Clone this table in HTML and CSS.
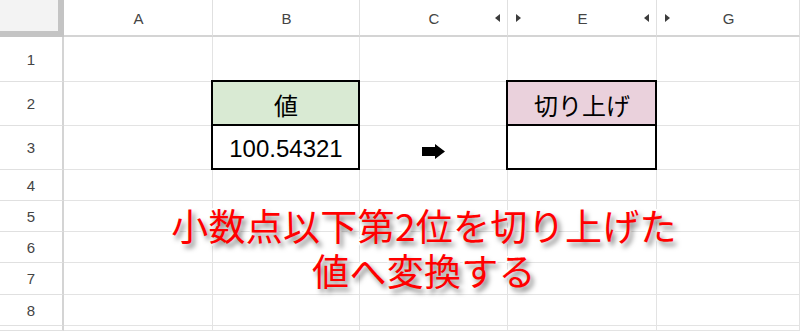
FILE: index.html
```html
<!DOCTYPE html>
<html lang="ja">
<head>
<meta charset="utf-8">
<title>切り上げ</title>
<link rel="stylesheet" href="styles.css">
</head>
<body>
<div class="sheet">
  <div class="grid">
    <div class="corner"></div>
    <div class="colhead"><span></span><span class="letter">A</span><span></span></div>
    <div class="colhead"><span></span><span class="letter">B</span><span></span></div>
    <div class="colhead"><span></span><span class="letter">C</span><span class="mark left"></span></div>
    <div class="colhead"><span class="mark right"></span><span class="letter">E</span><span class="mark left"></span></div>
    <div class="colhead"><span class="mark right"></span><span class="letter">G</span><span></span></div>

    <div class="rowhead">1</div><div class="cell"></div><div class="cell"></div><div class="cell"></div><div class="cell"></div><div class="cell"></div>

    <div class="rowhead">2</div><div class="cell"></div>
    <div class="cell box green jp">値</div>
    <div class="cell"></div>
    <div class="cell box pink jp">切り上げ</div>
    <div class="cell"></div>

    <div class="rowhead">3</div><div class="cell"></div>
    <div class="cell box num">100.54321</div>
    <div class="cell arrowcell"><svg class="arrow" width="23" height="15" viewBox="0 0 23 15"><path d="M0 3H13V0L23 7.5L13 15V12H0Z" fill="#000"/></svg></div>
    <div class="cell box"></div>
    <div class="cell"></div>

    <div class="rowhead">4</div><div class="cell"></div><div class="cell"></div><div class="cell"></div><div class="cell"></div><div class="cell"></div>
    <div class="rowhead">5</div><div class="cell"></div><div class="cell"></div><div class="cell"></div><div class="cell"></div><div class="cell"></div>
    <div class="rowhead">6</div><div class="cell"></div><div class="cell"></div><div class="cell"></div><div class="cell"></div><div class="cell"></div>
    <div class="rowhead">7</div><div class="cell"></div><div class="cell"></div><div class="cell"></div><div class="cell"></div><div class="cell"></div>
    <div class="rowhead">8</div><div class="cell"></div><div class="cell"></div><div class="cell"></div><div class="cell"></div><div class="cell"></div>
    <div class="rowhead"></div><div class="cell"></div><div class="cell"></div><div class="cell"></div><div class="cell"></div><div class="cell"></div>
  </div>
  <div class="caption">小数点以下第2位を切り上げた<br>値へ変換する</div>
</div>
</body>
</html>
```
FILE: styles.css
```css
* { box-sizing: border-box; }
html, body { margin: 0; padding: 0; background: #fff; }
.sheet {
  position: relative;
  width: 800px;
  height: 331px;
  overflow: hidden;
}
.grid {
  display: grid;
  grid-template-columns: 64px 149px 147px 148px 149px 1fr;
  grid-template-rows: 37px 45px 44px 44px 31px 31px 31px 32px 31px 1fr;
  height: 331px;
  font-family: "Liberation Sans", Arial, sans-serif;
}
.corner {
  background: #f3f3f3;
  border-right: 6px solid #c4c4c4;
  border-bottom: 6px solid #c4c4c4;
}
.colhead {
  display: grid;
  grid-template-columns: 1fr auto 1fr;
  align-items: center;
  padding: 0 7px 0 8px;
  border-right: 1px solid #e0e0e0;
  border-bottom: 2px solid #d4d4d4;
  font-size: 15px;
  color: #444;
}
.colhead .letter { padding-top: 1px; }
.mark { width: 0; height: 0; border-top: 4px solid transparent; border-bottom: 4px solid transparent; }
.mark.left { justify-self: end; border-right: 5px solid #3c3c3c; }
.mark.right { justify-self: start; border-left: 5px solid #3c3c3c; }
.rowhead {
  display: flex;
  align-items: center;
  justify-content: center;
  border-right: 2px solid #d4d4d4;
  border-bottom: 1px solid #e0e0e0;
  font-size: 15px;
  color: #444;
}
.cell {
  position: relative;
  display: flex;
  align-items: center;
  justify-content: center;
  border-right: 1px solid #e3e3e3;
  border-bottom: 1px solid #e3e3e3;
  color: #000;
}
.box::after {
  content: "";
  position: absolute;
  top: -2px;
  left: -2px;
  right: -1px;
  bottom: -1px;
  border: 2px solid #000;
  pointer-events: none;
}
.green { background: #d9ead3; }
.pink { background: #ead1dc; }
.jp {
  font-family: "Noto Sans CJK JP", "Liberation Sans", sans-serif;
  font-size: 24px;
  padding-top: 2px;
}
.num {
  font-family: "Liberation Sans", Arial, sans-serif;
  font-size: 24px;
  padding-top: 2px;
}
.arrowcell .arrow { margin-top: 8px; }
.caption {
  position: absolute;
  top: 203px;
  left: 124px;
  width: 600px;
  text-align: center;
  font-family: "Noto Sans CJK JP", sans-serif;
  font-size: 37px;
  line-height: 45px;
  letter-spacing: 0.3px;
  color: #ff0000;
  -webkit-text-stroke: 4px #fff;
  paint-order: stroke fill;
  text-shadow: 3px 4px 5px rgba(0, 0, 0, 0.5);
}
```
